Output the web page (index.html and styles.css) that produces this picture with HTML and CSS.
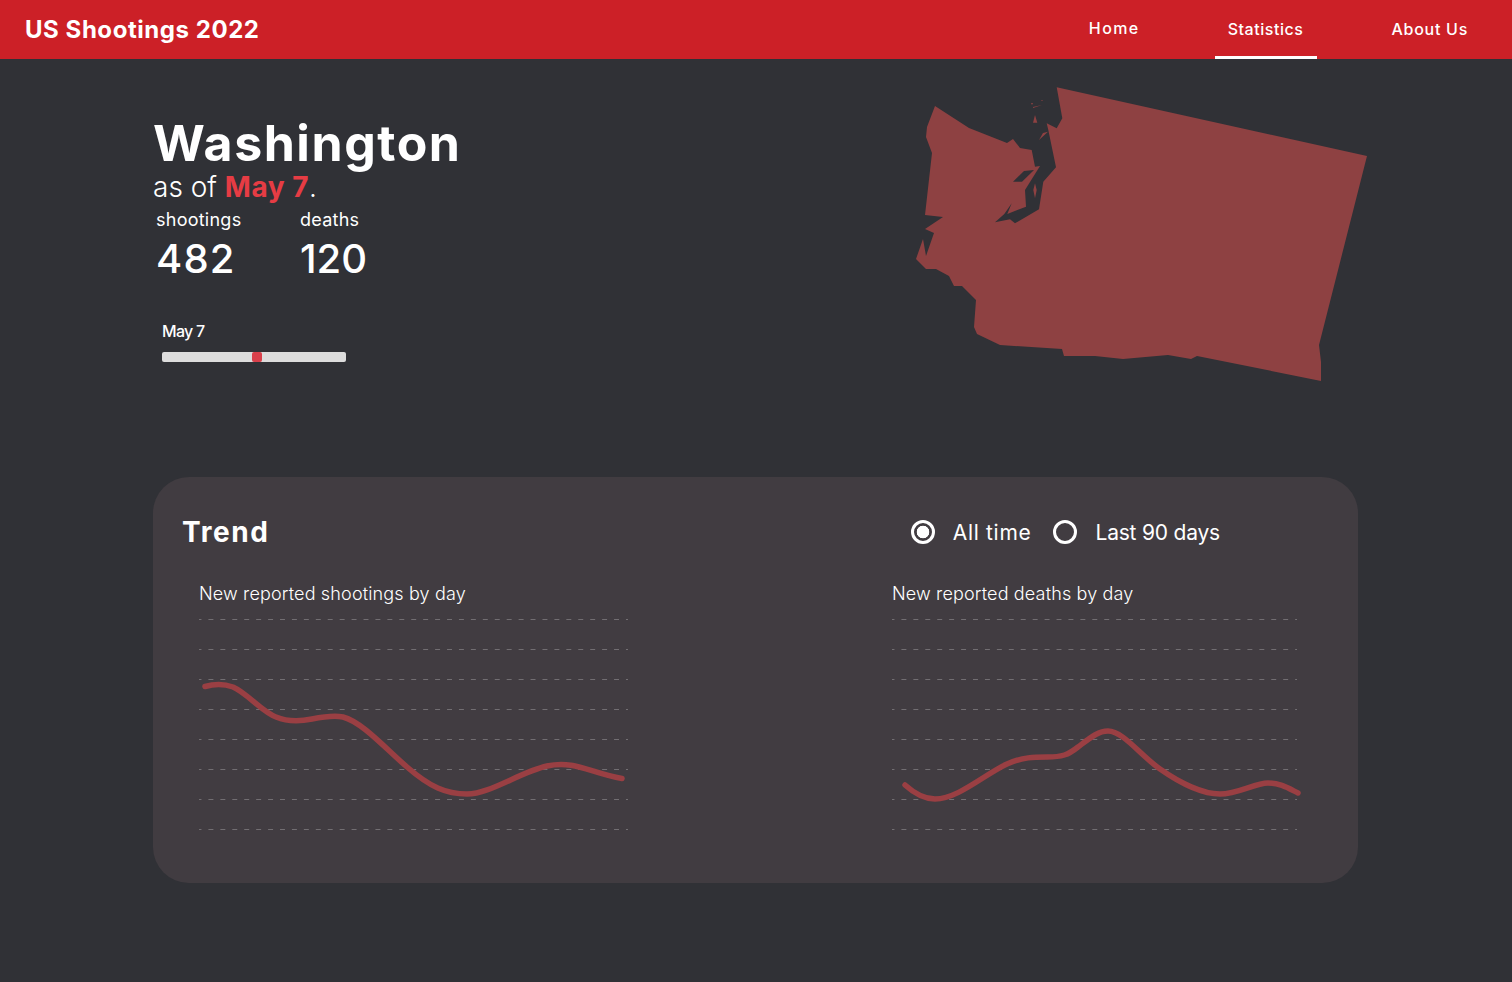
FILE: index.html
```html
<!DOCTYPE html>
<html lang="en">
<head>
<meta charset="utf-8">
<title>US Shootings 2022</title>
<link rel="stylesheet" href="styles.css">
</head>
<body>
<header class="topbar">
  <div class="brand">US Shootings 2022</div>
  <nav class="nav">
    <a class="nav-item nav-home">Home</a>
    <a class="nav-item nav-active">Statistics</a>
    <a class="nav-item nav-about">About Us</a>
  </nav>
</header>
<main class="page">
  <section class="hero">
    <div class="summary">
      <h1 class="state">Washington</h1>
      <p class="asof">as of <strong class="accent">May 7</strong>.</p>
      <div class="stats">
        <div class="stat stat-one">
          <div class="stat-label">shootings</div>
          <div class="stat-value">482</div>
        </div>
        <div class="stat stat-two">
          <div class="stat-label">deaths</div>
          <div class="stat-value">120</div>
        </div>
      </div>
      <div class="slider">
        <div class="slider-label">May 7</div>
        <div class="slider-track"><span class="slider-thumb"></span></div>
      </div>
    </div>
    <svg class="map" viewBox="916 85 452 297" width="452" height="297" aria-label="Map of Washington">
      <path class="land" d="M1056.7 87.3L1367 156L1319 345L1321 362L1321 381L1197 356L1191 359L1168 355L1123 359L1095 356L1064 356L1062 349L1000 345L977 334L974 327L976 300L962 286L954 286L949 276L936 269L926 269L916 259L923 239L926 256L934 233L925 229L943 217L925 215L932 153L926 137L927 127L935 106L969 128L1007 143L1013 139L1020 148L1031.7 150L1035 166.7L1040 166L1025 190L1026 206.7L1007.3 214L1011.7 203.3L1004.3 214L995 222.3L1010 219.3L1015 223.3L1039 209.3L1043.3 181.7L1056 167.3L1048.3 130L1046.7 123.3L1056.7 128.3L1062.3 118.3Z"/>
      <path class="water" d="M1013 181.7L1024 171L1034 170L1022 181.7Z"/>
      <path class="land" d="M1035 183.3L1036.7 190L1035 198.3L1033.3 190ZM1048 131.7L1039 140L1043 133ZM1033 122.7L1037.3 122.7L1035 115ZM1033 108L1042 105L1033 107ZM1032 105L1033 103L1031 103ZM1042 101L1043 100L1041 100Z"/>
    </svg>
  </section>
  <section class="panel">
    <div class="panel-head">
      <h2 class="panel-title">Trend</h2>
      <div class="radios">
        <label class="radio radio-all"><span class="radio-mark radio-on"></span>All time</label>
        <label class="radio radio-last"><span class="radio-mark"></span>Last 90 days</label>
      </div>
    </div>
    <div class="charts">
      <figure class="chart chart-one">
        <figcaption class="chart-title">New reported shootings by day</figcaption>
        <svg viewBox="199 615 430 220" width="430" height="220">
          <path class="grid" d="M199 619.5H628M199 649.5H628M199 679.5H628M199 709.5H628M199 739.5H628M199 769.5H628M199 799.5H628M199 829.5H628"/>
          <path class="trend" d="M205 686.5C212 684.5 222 683 233 687C247 693 262 712 276 717C288 722 300 721.5 312 719C322 717 333 715 343 717C362 722 385 748 407 767C430 787 446 794 467 794C490 794 520 772 547 766C575 760 590 773 622 778.5"/>
        </svg>
      </figure>
      <figure class="chart chart-two">
        <figcaption class="chart-title">New reported deaths by day</figcaption>
        <svg viewBox="892 615 410 220" width="410" height="220">
          <path class="grid" d="M892 619.5H1297M892 649.5H1297M892 679.5H1297M892 709.5H1297M892 739.5H1297M892 769.5H1297M892 799.5H1297M892 829.5H1297"/>
          <path class="trend" d="M905 785C915 794 924 799 935 799C958 799 985 774 1007 764C1022 757 1035 757 1047 757C1062 757 1068 755 1078 747C1090 738 1098 731 1108 731C1123 731 1140 755 1160 769C1180 783 1203 794 1220 794C1238 794 1255 783 1268 783C1280 783 1288 788 1298 793"/>
        </svg>
      </figure>
    </div>
  </section>
</main>
</body>
</html>
```
FILE: styles.css
```css
* { box-sizing: border-box; }
html, body { margin: 0; height: 100%; }
body {
  background: #303136;
  color: #fff;
  font-family: "Inter", "Liberation Sans", sans-serif;
  overflow: hidden;
}
.topbar {
  height: 59px;
  background: #cc2027;
  display: flex;
  align-items: stretch;
  justify-content: space-between;
  padding: 0 44px 0 25px;
}
.brand {
  font-size: 24px;
  font-weight: 700;
  line-height: 59px;
  letter-spacing: 0.55px;
}
.nav { display: flex; gap: 75px; }
.nav-item {
  font-size: 16px;
  font-weight: 500;
  line-height: 59px;
  letter-spacing: 0.55px;
}
.nav-home { line-height: 56px; letter-spacing: 1.4px; }
.nav-about { letter-spacing: 0.72px; }
.nav-active {
  padding: 0 13px;
  border-bottom: 3px solid #fff;
}
.page { padding-top: 26px; }
.hero {
  display: flex;
  justify-content: space-between;
  padding: 0 144px 0 153px;
  height: 392px;
}
.summary { padding-top: 30px; }
.state {
  margin: 0;
  font-size: 50px;
  font-weight: 700;
  line-height: 56px;
  letter-spacing: 1.55px;
}
.asof {
  margin: 0;
  font-size: 28px;
  font-weight: 300;
  line-height: 32px;
}
.accent { color: #e63c44; font-weight: 700; letter-spacing: 0.5px; }
.stats { display: flex; padding-top: 4px; padding-left: 1px; }
.stat-one { padding-left: 2px; width: 146px; }
.stat-label { font-size: 18px; line-height: 26px; font-weight: 400; letter-spacing: 0.25px; }
.stat-value { font-size: 40px; line-height: 54px; font-weight: 500; margin-top: -1px; }
.stat-one .stat-value { letter-spacing: 1.2px; }
.slider { padding: 33px 0 0 9px; }
.slider-label {
  font-size: 16px;
  font-weight: 500;
  line-height: 24px;
  letter-spacing: -0.7px;
}
.slider-track {
  position: relative;
  width: 184px;
  height: 10px;
  margin-top: 9px;
  background: #ddd;
  border-radius: 2px;
}
.slider-thumb {
  position: absolute;
  left: 90px;
  top: 0;
  width: 10px;
  height: 10px;
  background: #d9404b;
  border-radius: 2px;
}
.map { display: block; flex: none; }
.land { fill: #8e4142; }
.water { fill: #303136; }
.panel {
  width: 1205px;
  height: 406px;
  margin-left: 153px;
  background: #413c41;
  border-radius: 36px;
  padding: 0 30px 0 29px;
}
.panel-head {
  display: flex;
  align-items: center;
  height: 103px;
  padding-top: 7px;
}
.panel-title {
  margin: 0;
  font-size: 28px;
  font-weight: 700;
  letter-spacing: 1.6px;
}
.radios {
  display: flex;
  gap: 22px;
  margin-left: auto;
  margin-right: 108px;
}
.radio {
  display: flex;
  align-items: center;
  gap: 18px;
  font-size: 21px;
  font-weight: 400;
}
.radio-all { letter-spacing: 0.7px; }
.radio-last { letter-spacing: -0.2px; }
.radio-mark {
  width: 24px;
  height: 24px;
  border: 3px solid #fff;
  border-radius: 50%;
  flex: none;
  display: block;
}
.radio-on { background: radial-gradient(circle, #fff 0 6px, transparent 6.6px); }
.charts { display: flex; justify-content: space-between; padding-left: 17px; padding-right: 26px; }
.chart { margin: 0; }
.chart svg { display: block; overflow: visible; }
.chart-one { width: 430px; }
.chart-two { width: 410px; }
.chart-title {
  font-size: 18px;
  font-weight: 300;
  line-height: 28px;
  letter-spacing: 0.15px;
  margin-bottom: 7px;
  height: 28px;
}
.grid {
  fill: none;
  stroke: rgba(255, 255, 255, 0.26);
  stroke-width: 1;
  stroke-dasharray: 4.97 6.96;
  stroke-dashoffset: 2.5;
}
.trend {
  fill: none;
  stroke: #9a3f43;
  stroke-width: 5.5;
  stroke-linecap: round;
  stroke-linejoin: round;
}
```
